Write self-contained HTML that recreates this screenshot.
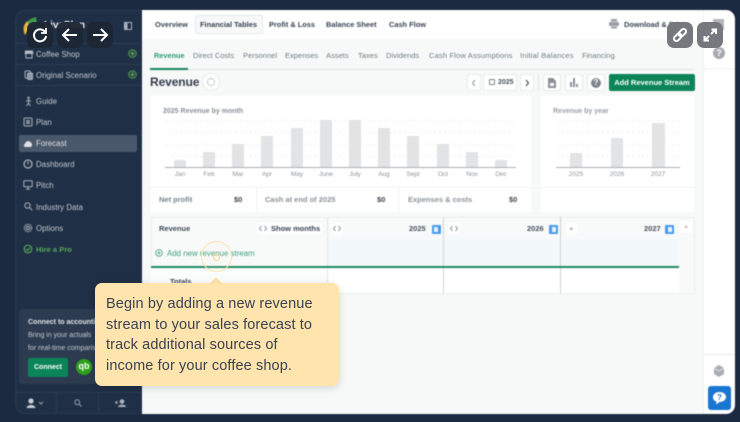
<!DOCTYPE html>
<html><head><meta charset="utf-8"><style>
*{box-sizing:border-box}
html,body{margin:0;padding:0;width:740px;height:422px;overflow:hidden;background:#1b2a40;font-family:"Liberation Sans",sans-serif}
.a,.t{position:absolute}
.t{white-space:nowrap;line-height:12px;font-size:7.5px;color:#6d7580;margin-top:1px}
.b{font-weight:bold}
#app{position:absolute;left:0;top:0;width:740px;height:422px;filter:blur(.4px)}
.s{color:#c4cad2;font-size:7.8px;letter-spacing:.05px}
.nav{color:#3b4454;font-weight:bold;font-size:7.4px}
.tab{color:#737b85;font-size:7.5px;letter-spacing:.03px}
.ctl{position:absolute;top:74px;height:17px;background:#fff;border:1px solid #e7eaea;border-radius:2px}
.bar{position:absolute;width:12px;background:#e1e3e4;border-radius:1px 1px 0 0}
.grid{position:absolute;height:0;border-top:1px dashed #f1f2f2}
.lbl{font-size:6.5px;color:#8d939b;text-align:center;width:30px}
.mini{position:absolute;background:#fff;border-radius:2px}
.badge{position:absolute;width:9px;height:9px;background:#4a9bea;border-radius:1px}
.badge:after{content:"";position:absolute;left:2.500px;top:2px;width:4px;height:5px;background:#e8f2fc}
.ov{position:absolute;top:22px;width:26px;height:26px;border-radius:7px}
.sep{position:absolute;left:15px;width:126px;height:1px;background:#2b3b51}
.i{position:absolute;fill:none;stroke:#aab2bd;stroke-width:1}
.chev{position:absolute;fill:none;stroke:#7d838b;stroke-width:.9}
</style></head><body>
<div id="app">
<!-- sidebar -->
<div class="a" style="left:15px;top:10px;width:127px;height:404px;background:#1f2f45;border-radius:10px 0 0 10px;border-left:1px solid #2a3a50;border-top:1px solid #2a3a50;border-bottom:1px solid #2a3a50"></div>
<svg class="a" style="left:22px;top:16px" width="18" height="20" viewBox="0 0 18 20"><path d="M3 19C0 13 2 7 6 5L7 12Z" fill="#e8b53a"/><path d="M6 5C8 3 11 2 14 1L15 8C12 8 9 9 7 12Z" fill="#3e9a4a"/></svg>
<div class="t b" style="left:44px;top:19px;font-size:10px;color:#e8ebee">LivePlan</div>
<svg class="a" style="left:124px;top:22px" width="8" height="8"><rect x=".5" y=".5" width="7" height="7" fill="none" stroke="#aab2bd"/><rect x="1" y="1" width="2.500" height="6" fill="#aab2bd"/></svg>
<div class="sep" style="top:43px"></div><div class="sep" style="top:64px"></div><div class="sep" style="top:85px"></div>

<svg class="i" style="left:24px;top:50px" width="10" height="9"><path d="M1.500 1h7l.5 2.500H1z" fill="#b9c0ca"/><path d="M2 4v4h6V4" /></svg>
<div class="t s" style="left:36px;top:48px">Coffee Shop</div>
<svg class="a" style="left:128px;top:49px" width="9" height="9"><circle cx="4.500" cy="4.500" r="3.800" fill="#2f4a42" stroke="#4f9a55"/><path d="M2.500 4.500h4M4.500 2.500v4" stroke="#6db072" stroke-width=".8"/></svg>
<svg class="i" style="left:24px;top:70px" width="10" height="10"><rect x="1" y="1" width="5.500" height="7" rx="1"/><rect x="3.500" y="3" width="5" height="6.500" rx="1" fill="#8f98a5"/></svg>
<div class="t s" style="left:36px;top:69px">Original Scenario</div>
<svg class="a" style="left:128px;top:70px" width="9" height="9"><circle cx="4.500" cy="4.500" r="3.800" fill="#2f4a42" stroke="#4f9a55"/><path d="M2.500 4.500h4M4.500 2.500v4" stroke="#6db072" stroke-width=".8"/></svg>
<svg class="i" style="left:24px;top:96px" width="9" height="11"><circle cx="4.500" cy="1.800" r="1.300" fill="#98a1ad" stroke="none"/><path d="M4.500 3.500v3.500l-2 3M4.500 7l2 3M2 5.500l2.500-1.500 2.500 1.500"/></svg>
<div class="t s" style="left:36px;top:95px">Guide</div>
<svg class="i" style="left:23px;top:117px" width="10" height="10"><rect x="1" y="1" width="8" height="8" rx="1"/><path d="M3 3.500h4M3 5h4M3 6.500h4"/></svg>
<div class="t s" style="left:36px;top:116px">Plan</div>
<div class="a" style="left:19px;top:135px;width:118px;height:17px;background:#4a586c;border-radius:2px"></div>
<svg class="a" style="left:23px;top:139px" width="10" height="9"><path d="M2.500 8C.5 8 .3 5.200 2 4.800 2.500 2 6.500 1 8 3.800c1.500.4 1.500 4.200-.5 4.200z" fill="#dde0e5"/></svg>
<div class="t s" style="left:36px;top:137px;color:#dde0e5">Forecast</div>
<svg class="i" style="left:23px;top:159px" width="10" height="10"><circle cx="5" cy="5" r="4" stroke-width="1.300"/><path d="M5 2.500V5.500"/></svg>
<div class="t s" style="left:36px;top:158px">Dashboard</div>
<svg class="i" style="left:23px;top:180px" width="10" height="10"><rect x=".8" y=".8" width="8.400" height="6" rx=".8"/><path d="M5 7v2M3 9.200h4"/></svg>
<div class="t s" style="left:36px;top:179px">Pitch</div>
<svg class="i" style="left:24px;top:202px" width="9" height="9"><circle cx="3.500" cy="3.500" r="2.700"/><path d="M5.500 5.500l2.800 2.800"/></svg>
<div class="t s" style="left:36px;top:201px">Industry Data</div>
<svg class="i" style="left:23px;top:223px" width="10" height="10"><circle cx="5" cy="5" r="1.500"/><circle cx="5" cy="5" r="3.600" stroke-dasharray="1.500 .8" stroke-width="1.300"/></svg>
<div class="t s" style="left:36px;top:222px">Options</div>
<svg class="a" style="left:23px;top:244px" width="10" height="10" fill="none" stroke="#55a65b" stroke-width="1.200"><circle cx="5" cy="5" r="3.800"/><path d="M3.200 5.200l1.300 1.200 2.300-2.600"/></svg>
<div class="t s" style="left:36px;top:243px;color:#58a85d;font-weight:bold;font-size:7.500px">Hire a Pro</div>
<div class="a" style="left:19px;top:309px;width:100px;height:75px;background:#2c3b50;border-radius:3px"></div>
<div class="t b" style="left:28px;top:316px;color:#dfe2e6;font-size:7px">Connect to accounting</div>
<div class="t" style="left:28px;top:329px;color:#c4c9d0;font-size:7px">Bring in your actuals</div>
<div class="t" style="left:28px;top:342px;color:#c4c9d0;font-size:7px">for real-time comparison</div>
<div class="a" style="left:28px;top:358px;width:40px;height:19px;background:#0b8457;border-radius:2px"></div>
<div class="t b" style="left:28px;top:361px;width:40px;text-align:center;color:#fff;font-size:7px">Connect</div>
<div class="a" style="left:76px;top:359px;width:16px;height:16px;background:#2ca01c;border-radius:50%;color:#fff;font-size:9px;line-height:15px;text-align:center;font-weight:bold">qb</div>
<div class="sep" style="top:392px"></div>
<div class="a" style="left:56px;top:393px;width:1px;height:20px;background:#2b3b51"></div>
<div class="a" style="left:98px;top:393px;width:1px;height:20px;background:#2b3b51"></div>
<svg class="a" style="left:26px;top:398px" width="18" height="10"><circle cx="5" cy="3" r="2.600" fill="#c8ced6"/><path d="M.5 10C1 6 9 6 9.500 10Z" fill="#c8ced6"/><path d="M13 4l2 2 2-2" fill="none" stroke="#98a1ad"/></svg>
<svg class="a" style="left:74px;top:399px" width="8" height="8"><circle cx="3.200" cy="3.200" r="2.400" fill="none" stroke="#98a1ad"/><path d="M5 5l2.500 2.500" stroke="#98a1ad"/></svg>
<svg class="a" style="left:115px;top:399px" width="11" height="8"><circle cx="7" cy="2.500" r="2.300" fill="#aab2bd"/><path d="M3 8C3 4.800 11 4.800 11 8Z" fill="#aab2bd"/><path d="M0 3.500h3M1.500 2v3" stroke="#aab2bd"/></svg>

<!-- main -->
<div class="a" style="left:142px;top:10px;width:593px;height:404px;background:#fff;border-radius:0 9px 9px 0"></div>
<div class="a" style="left:142px;top:39px;width:561px;height:374px;background:#f7f9f9"></div>
<div class="a" style="left:703px;top:10px;width:1px;height:404px;background:#eef0f0"></div>
<div class="a" style="left:703px;top:68px;width:32px;height:1px;background:#eef0f0"></div>
<div class="a" style="left:703px;top:354px;width:32px;height:1px;background:#e7e9e9"></div>
<div class="a" style="left:195px;top:15px;width:68px;height:19px;background:#f7f8f8;border:1px solid #e6e8e8;border-radius:2px"></div>
<div class="t nav" style="left:155px;top:18px">Overview</div>
<div class="t nav" style="left:200px;top:18px">Financial Tables</div>
<div class="t nav" style="left:269px;top:18px">Profit &amp; Loss</div>
<div class="t nav" style="left:326px;top:18px">Balance Sheet</div>
<div class="t nav" style="left:389px;top:18px">Cash Flow</div>
<svg class="a" style="left:609px;top:19px" width="10" height="10"><rect x="2" y="0" width="6" height="2.500" fill="#9a9fa6"/><rect x="0" y="3" width="10" height="4" rx="1" fill="#9a9fa6"/><rect x="2" y="7.500" width="6" height="2" fill="#9a9fa6"/></svg>
<div class="t nav" style="left:624px;top:18px">Download &amp; Print</div>
<div class="a" style="left:713px;top:19px;width:11px;height:11px;background:#b2b5b9"></div>
<div class="a" style="left:713px;top:47px;width:12px;height:12px;background:#a7abaf;border-radius:50%;color:#fff;font-size:9px;font-weight:bold;text-align:center;line-height:12px">?</div>

<div class="a" style="left:150px;top:69px;width:545px;height:1px;background:#dfe3e3"></div>
<div class="a" style="left:150px;top:68px;width:38px;height:2px;background:#17865c"></div>
<div class="t tab" style="left:154px;top:49px;color:#2c9a72;font-weight:bold;font-size:7.300px">Revenue</div>
<div class="t tab" style="left:193px;top:49px">Direct Costs</div>
<div class="t tab" style="left:243px;top:49px">Personnel</div>
<div class="t tab" style="left:285px;top:49px">Expenses</div>
<div class="t tab" style="left:326px;top:49px">Assets</div>
<div class="t tab" style="left:358px;top:49px">Taxes</div>
<div class="t tab" style="left:386px;top:49px">Dividends</div>
<div class="t tab" style="left:429px;top:49px;letter-spacing:.17px">Cash Flow Assumptions</div>
<div class="t tab" style="left:520px;top:49px;letter-spacing:.2px">Initial Balances</div>
<div class="t tab" style="left:582px;top:49px">Financing</div>

<div class="t b" style="left:150px;top:74px;font-size:12px;line-height:14px;color:#343d4b;letter-spacing:-.1px">Revenue</div>
<div class="a" style="left:202px;top:73px;width:18px;height:18px;background:#fff;border:1px solid #e8eaea;border-radius:50%"></div>
<div class="a" style="left:207px;top:78px;width:8px;height:8px;border:1px dotted #8f959d;border-radius:50%"></div>

<div class="ctl" style="left:467px;width:14px"></div><svg class="chev" style="left:471px;top:79px" width="6" height="8"><path d="M4 1L1.500 4 4 7"/></svg>
<div class="ctl" style="left:483px;width:34px"></div>
<div class="a" style="left:489px;top:79px;width:6px;height:6px;border:1px solid #7f858d;border-radius:1px"></div>
<div class="t b" style="left:498px;top:76px;font-size:7px;color:#4a5260">2025</div>
<div class="ctl" style="left:520px;width:14px"></div><svg class="chev" style="left:524px;top:79px;stroke:#3f4754;stroke-width:1.100" width="6" height="8"><path d="M2 1l2.500 3L2 7"/></svg>
<div class="a" style="left:538px;top:74px;width:1px;height:17px;background:#e3e5e5"></div>
<div class="ctl" style="left:543px;width:18px"></div><svg class="a" style="left:548px;top:78px" width="8" height="10"><path d="M0 0h5l3 3v7H0z" fill="#8b9097"/><rect x="2" y="5" width="4" height="3" fill="#fff"/></svg>
<div class="ctl" style="left:565px;width:18px"></div>
<div class="a" style="left:570px;top:82px;width:2px;height:5px;background:#8b9097"></div><div class="a" style="left:573px;top:78px;width:2px;height:9px;background:#8b9097"></div><div class="a" style="left:576px;top:84px;width:2px;height:3px;background:#8b9097"></div>
<div class="ctl" style="left:587px;width:18px"></div><div class="a" style="left:591px;top:78px;width:10px;height:10px;background:#7f858d;border-radius:50%;color:#fff;font-size:8px;font-weight:bold;line-height:10px;text-align:center">?</div>
<div class="a" style="left:609px;top:74px;width:86px;height:17px;background:#0b8457;border-radius:2px;color:#fff;font-size:7.500px;font-weight:bold;text-align:center;line-height:18px">Add Revenue Stream</div>

<!-- month chart -->
<div class="a" style="left:151px;top:96px;width:380px;height:116px;background:#fff"></div>
<div class="t b" style="left:163px;top:105px;font-size:7px;color:#8a9098">2025 Revenue by month</div>
<div class="grid" style="left:165px;top:120px;width:351px"></div><div class="grid" style="left:165px;top:132px;width:351px"></div><div class="grid" style="left:165px;top:144px;width:351px"></div><div class="grid" style="left:165px;top:156px;width:351px"></div>
<div class="bar" style="left:174px;top:160px;height:7px"></div><div class="bar" style="left:203px;top:152px;height:15px"></div><div class="bar" style="left:232px;top:144px;height:23px"></div><div class="bar" style="left:261px;top:136px;height:31px"></div><div class="bar" style="left:291px;top:128px;height:39px"></div><div class="bar" style="left:320px;top:120px;height:47px"></div><div class="bar" style="left:349px;top:120px;height:47px"></div><div class="bar" style="left:378px;top:128px;height:39px"></div><div class="bar" style="left:407px;top:136px;height:31px"></div><div class="bar" style="left:437px;top:144px;height:23px"></div><div class="bar" style="left:466px;top:152px;height:15px"></div><div class="bar" style="left:495px;top:160px;height:7px"></div>
<div class="a" style="left:165px;top:167px;width:351px;height:1px;background:#a9adb2"></div>
<div class="t lbl" style="left:165px;top:168px">Jan</div><div class="t lbl" style="left:194px;top:168px">Feb</div><div class="t lbl" style="left:223px;top:168px">Mar</div><div class="t lbl" style="left:252px;top:168px">Apr</div><div class="t lbl" style="left:282px;top:168px">May</div><div class="t lbl" style="left:311px;top:168px">June</div><div class="t lbl" style="left:340px;top:168px">July</div><div class="t lbl" style="left:369px;top:168px">Aug</div><div class="t lbl" style="left:398px;top:168px">Sept</div><div class="t lbl" style="left:428px;top:168px">Oct</div><div class="t lbl" style="left:457px;top:168px">Nov</div><div class="t lbl" style="left:486px;top:168px">Dec</div>
<div class="a" style="left:151px;top:187px;width:380px;height:1px;background:#eff1f1"></div>
<div class="a" style="left:256px;top:187px;width:1px;height:25px;background:#eff1f1"></div><div class="a" style="left:398px;top:187px;width:1px;height:25px;background:#eff1f1"></div>
<div class="t" style="left:159px;top:193px;font-weight:bold;color:#7d848e">Net profit</div>
<div class="t b" style="left:234px;top:193px;color:#3f4754">$0</div>
<div class="t" style="left:265px;top:193px;font-weight:bold;color:#8d939b">Cash at end of 2025</div>
<div class="t b" style="left:377px;top:193px;color:#3f4754">$0</div>
<div class="t" style="left:408px;top:193px;font-weight:bold;color:#8d939b">Expenses &amp; costs</div>
<div class="t b" style="left:509px;top:193px;color:#3f4754">$0</div>

<!-- year chart -->
<div class="a" style="left:541px;top:96px;width:153px;height:116px;background:#fff"></div>
<div class="t b" style="left:553px;top:105px;font-size:7px;color:#9a9fa6">Revenue by year</div>
<div class="grid" style="left:556px;top:120px;width:124px"></div><div class="grid" style="left:556px;top:132px;width:124px"></div><div class="grid" style="left:556px;top:144px;width:124px"></div><div class="grid" style="left:556px;top:156px;width:124px"></div>
<div class="bar" style="left:570px;top:153px;height:14px"></div><div class="bar" style="left:611px;top:138px;height:29px"></div><div class="bar" style="left:652px;top:123px;height:44px;width:13px"></div>
<div class="a" style="left:556px;top:167px;width:124px;height:1px;background:#a9adb2"></div>
<div class="t lbl" style="left:561px;top:168px">2025</div><div class="t lbl" style="left:602px;top:168px">2026</div><div class="t lbl" style="left:643px;top:168px">2027</div>
<div class="a" style="left:541px;top:187px;width:153px;height:1px;background:#eff1f1"></div>

<!-- table -->
<div class="a" style="left:151px;top:217px;width:544px;height:77px;background:#f8fafa;border:1px solid #eceeee"></div>
<div class="a" style="left:327px;top:239px;width:352px;height:27px;background:#f3f8fa"></div>
<div class="a" style="left:327px;top:268px;width:352px;height:25px;background:#fff"></div>
<div class="a" style="left:151px;top:268px;width:176px;height:25px;background:#fbfcfc"></div>
<div class="a" style="left:327px;top:217px;width:1px;height:76px;background:#e2e5e5"></div>
<div class="a" style="left:443px;top:217px;width:1px;height:76px;background:#d3d6d6"></div>
<div class="a" style="left:560px;top:217px;width:1px;height:76px;background:#cdd0d0"></div>
<div class="a" style="left:151px;top:266px;width:528px;height:2px;background:#1f8a60"></div>
<div class="t b" style="left:159px;top:222px;color:#424a58">Revenue</div>
<div class="mini" style="left:257px;top:223px;width:12px;height:11px"></div><svg class="chev" style="left:258px;top:225px" width="10" height="7"><path d="M3.500 1L1.500 3.500 3.500 6M6.500 1l2 2.500-2 2.500"/></svg>
<div class="mini" style="left:270px;top:223px;width:52px;height:11px"></div><div class="t b" style="left:271px;top:222px;color:#3b4454">Show months</div>
<div class="mini" style="left:331px;top:223px;width:12px;height:11px"></div><svg class="chev" style="left:332px;top:225px" width="10" height="7"><path d="M3.500 1L1.500 3.500 3.500 6M6.500 1l2 2.500-2 2.500"/></svg>
<div class="t b" style="left:409px;top:222px;color:#4a5260">2025</div><div class="badge" style="left:431.500px;top:225px"></div>
<div class="mini" style="left:448px;top:223px;width:12px;height:11px"></div><svg class="chev" style="left:449px;top:225px" width="10" height="7"><path d="M3.500 1L1.500 3.500 3.500 6M6.500 1l2 2.500-2 2.500"/></svg>
<div class="t b" style="left:527px;top:222px;color:#4a5260">2026</div><div class="badge" style="left:549px;top:225px"></div>
<div class="mini" style="left:566px;top:223px;width:11px;height:11px"></div><div class="t" style="left:569px;top:222px;color:#7d838b">+</div>
<div class="t b" style="left:644px;top:222px;color:#4a5260">2027</div><div class="badge" style="left:665px;top:225px"></div>
<div class="mini" style="left:680px;top:221px;width:12px;height:12px"></div><div class="t" style="left:684px;top:220px;color:#9a9fa6">+</div>
<svg class="a" style="left:155px;top:249px" width="8" height="8" fill="none" stroke="#46a583" stroke-width=".9"><circle cx="4" cy="4" r="3.300"/><path d="M2.500 4h3M4 2.500v3"/></svg>
<div class="t" style="left:167px;top:247px;color:#3f9f7e;font-size:7.900px">Add new revenue stream</div>
<div class="t b" style="left:170px;top:275px;color:#424a58">Totals</div>

<!-- right rail bottom -->
<svg class="a" style="left:713px;top:364px" width="12" height="13"><path d="M6 1l5 3v6l-5 3-5-3V4z" fill="#a9adb2"/><path d="M1 4l5 3 5-3" stroke="#fff" fill="none" stroke-width=".6"/></svg>
<div class="a" style="left:708px;top:386px;width:23px;height:24px;background:#1976d2;border-radius:3px"></div>
<svg class="a" style="left:712px;top:391px" width="15" height="14"><path d="M7.500 1C11 1 14 3 14 6S11 11 7.500 11L4 13.500 4.500 10.500C2 10 1 8 1 6 1 3 4 1 7.500 1Z" fill="#fff"/><text x="7.500" y="9" font-size="8" font-weight="bold" text-anchor="middle" fill="#1976d2" font-family="Liberation Sans, sans-serif">?</text></svg>
</div>

<!-- pulse -->
<div class="a" style="left:201px;top:241px;width:31px;height:31px;border:1px solid #fbe3ae;border-radius:50%;background:rgba(255,240,200,.08)"></div>
<div class="a" style="left:213px;top:254px;width:7px;height:7px;border:1px solid #f5d795;border-radius:50%"></div>

<!-- tooltip -->
<div class="a" style="left:211px;top:279px;width:10px;height:10px;background:#ffe5ad;transform:rotate(45deg)"></div>
<div class="a" style="left:95px;top:283px;width:244px;height:103px;background:#ffe5ad;border-radius:7px;box-shadow:0 2px 8px rgba(0,0,0,.15)"></div>
<div class="t" style="left:106px;top:294px;margin-top:0;font-size:14.500px;letter-spacing:.12px;line-height:20.600px;color:#3a4152;filter:blur(.2px)">Begin by adding a new revenue<br>stream to your sales forecast to<br>track additional sources of<br>income for your coffee shop.</div>

<!-- overlay buttons -->
<div class="ov" style="left:27px;background:rgba(30,38,52,.95)"></div>
<div class="ov" style="left:57px;background:rgba(30,38,52,.95)"></div>
<div class="ov" style="left:87px;background:rgba(30,38,52,.95)"></div>
<svg class="a" style="left:27px;top:22px" width="26" height="26" fill="none" stroke="#fff" stroke-width="2"><path d="M18 10A6 6 0 1 0 19 14"/><path d="M19 6v5h-5" stroke-width="1.800"/></svg>
<svg class="a" style="left:57px;top:22px" width="26" height="26" fill="none" stroke="#fff" stroke-width="2"><path d="M20 13H6M12 7l-6 6 6 6"/></svg>
<svg class="a" style="left:87px;top:22px" width="26" height="26" fill="none" stroke="#fff" stroke-width="2"><path d="M6 13h14M14 7l6 6-6 6"/></svg>
<div class="ov" style="left:667px;background:#76787d"></div>
<div class="ov" style="left:697px;background:#76787d"></div>
<svg class="a" style="left:667px;top:22px" width="26" height="26" fill="none" stroke="#fff" stroke-width="2"><g transform="rotate(-45 13 13)"><rect x="5.500" y="10.500" width="8.500" height="5" rx="2.500"/><rect x="12" y="10.500" width="8.500" height="5" rx="2.500"/></g></svg>
<svg class="a" style="left:697px;top:22px" width="26" height="26" fill="none" stroke="#fff" stroke-width="2"><path d="M8 18l4-4M14 12l4-4M14.500 7.500H19V12M7.500 14V18.500H12"/></svg>
</body></html>
